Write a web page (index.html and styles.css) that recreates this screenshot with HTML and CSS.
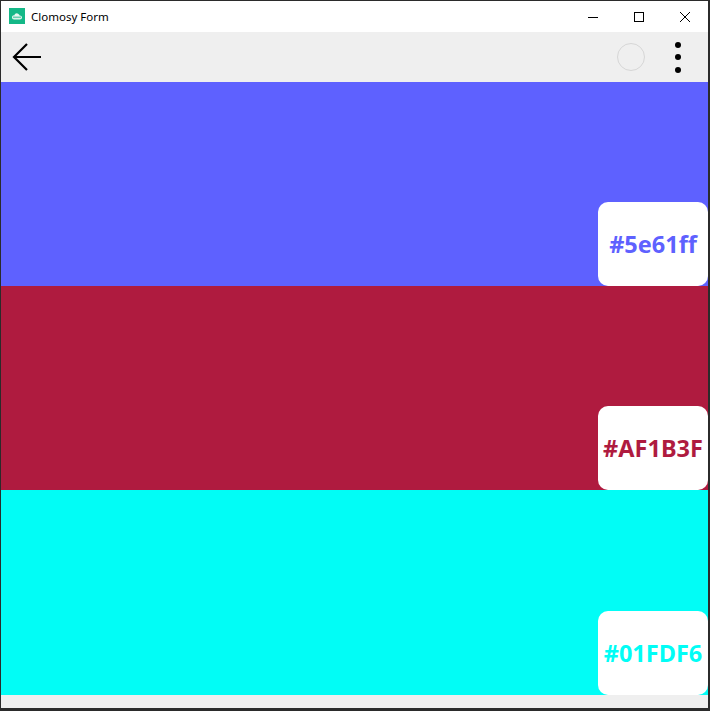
FILE: index.html
```html
<!DOCTYPE html>
<html>
<head>
<meta charset="utf-8">
<link rel="stylesheet" href="styles.css">
</head>
<body>
<div class="window">
  <div class="titlebar">
    <div class="app-icon">
      <svg width="16" height="16" viewBox="0 0 16 16"><rect width="16" height="16" fill="#14b887"/><path d="M3 9.5c0-1.5 1.2-2.3 2.3-2.1.4-1.4 1.6-2.2 3-2 1.1.1 2 .9 2.3 2 1.3-.1 2.4.8 2.4 2.1 0 1.2-1 2-2.2 2H5c-1.1 0-2-.8-2-2z" fill="#e8f7f1"/><rect x="4" y="8.5" width="8" height="1.6" fill="#14b887" opacity="0.6"/></svg>
    </div>
    <span class="title">Clomosy Form</span>
    <div class="controls">
      <span class="ctl"><svg width="12" height="12" viewBox="0 0 12 12"><path d="M1 6.5h10" stroke="#000" stroke-width="1"/></svg></span>
      <span class="ctl"><svg width="12" height="12" viewBox="0 0 12 12"><rect x="1.5" y="1.5" width="9" height="9" fill="none" stroke="#000" stroke-width="1"/></svg></span>
      <span class="ctl"><svg width="12" height="12" viewBox="0 0 12 12"><path d="M1 1l10 10M11 1L1 11" stroke="#000" stroke-width="1"/></svg></span>
    </div>
  </div>
  <div class="toolbar">
    <svg class="back" width="32" height="32" viewBox="0 0 32 32"><path d="M30 16H3M16 3L3 16l13 13" fill="none" stroke="#000" stroke-width="2.2"/></svg>
    <div class="spacer"></div>
    <div class="circle"></div>
    <div class="dots"><span></span><span></span><span></span></div>
  </div>
  <div class="band b1"><div class="label">#5e61ff</div></div>
  <div class="band b2"><div class="label">#AF1B3F</div></div>
  <div class="band b3"><div class="label">#01FDF6</div></div>
  <div class="footer"></div>
</div>
</body>
</html>
```
FILE: styles.css
```css
html, body {
  margin: 0;
  padding: 0;
  width: 710px;
  height: 711px;
  background: #2b2b2b;
  overflow: hidden;
}
.window {
  box-sizing: border-box;
  width: 710px;
  height: 711px;
  border-style: solid;
  border-color: #2b2b2b;
  border-width: 1px 2px 3px 1px;
  display: flex;
  flex-direction: column;
  background: #efefef;
  font-family: "Noto Sans", "Open Sans", sans-serif;
}
.titlebar {
  height: 31px;
  background: #fff;
  display: flex;
  align-items: center;
  flex-shrink: 0;
}
.app-icon {
  width: 16px;
  height: 16px;
  margin-left: 8px;
  margin-top: -1px;
}
.app-icon svg { display: block; }
.title {
  margin-left: 6px;
  font-size: 11.5px;
  color: #000;
  margin-top: -1px;
}
.controls {
  margin-left: auto;
  display: flex;
  height: 100%;
}
.ctl {
  width: 46px;
  display: flex;
  align-items: center;
  justify-content: center;
}
.ctl svg { display: block; }
.toolbar {
  height: 50px;
  background: #efefef;
  display: flex;
  align-items: center;
  flex-shrink: 0;
}
.back {
  margin-left: 10px;
  display: block;
}
.spacer { flex: 1; }
.circle {
  width: 28px;
  height: 28px;
  border-radius: 50%;
  border: 1px solid #d6d6d6;
  box-sizing: border-box;
  margin-right: 30px;
}
.dots {
  display: flex;
  flex-direction: column;
  gap: 6.5px;
  margin-right: 27px;
}
.dots span {
  width: 6px;
  height: 6px;
  border-radius: 50%;
  background: #000;
}
.band {
  height: 204px;
  display: flex;
  align-items: flex-end;
  justify-content: flex-end;
  flex-shrink: 0;
}
.b1 { background: #5e61ff; color: #5e61ff; }
.b2 { background: #af1b3f; color: #af1b3f; }
.b3 { background: #01fdf6; color: #01fdf6; height: 205px; }
.label {
  width: 110px;
  height: 84px;
  background: #fff;
  border-radius: 10px;
  display: flex;
  align-items: center;
  justify-content: center;
  font-weight: 700;
  font-size: 23.5px;
  padding-top: 0;
  box-sizing: border-box;
}
.footer {
  flex: 1;
  background: #efefef;
}
```
